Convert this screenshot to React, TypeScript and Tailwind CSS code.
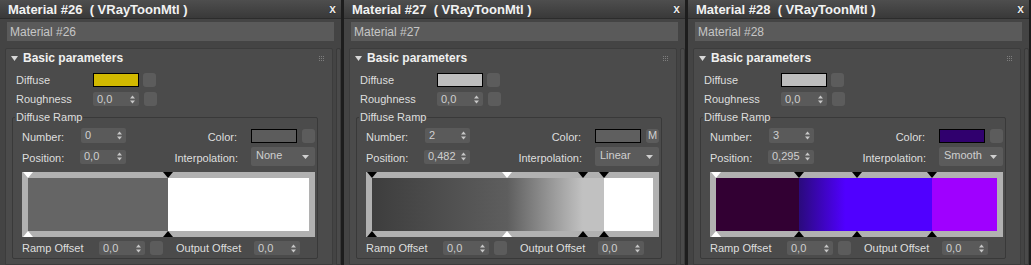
import React from 'react';

type Marker = { pos: number; white?: boolean };

interface PanelData {
  num: number;
  diffuse: string;
  number: string;
  position: string;
  interp: string;
  color: string;
  colorBtn?: string;
  ramp: string;
  markers: Marker[];
}

const panels: PanelData[] = [
  {
    num: 26,
    diffuse: 'bg-[#d2b900]',
    number: '0',
    position: '0,0',
    interp: 'None',
    color: 'bg-[#5c5c5c]',
    ramp: 'bg-[linear-gradient(to_right,#656565_0%,#656565_49.8%,#ffffff_49.8%,#ffffff_100%)]',
    markers: [{ pos: 0, white: true }, { pos: 0.498 }],
  },
  {
    num: 27,
    diffuse: 'bg-[#bebebe]',
    number: '2',
    position: '0,482',
    interp: 'Linear',
    color: 'bg-[#5f5f5f]',
    colorBtn: 'M',
    ramp: 'bg-[linear-gradient(to_right,#3d3d3d_0%,#5e5e5e_48.2%,#c1c1c1_75%,#c1c1c1_82.5%,#ffffff_82.5%,#ffffff_100%)]',
    markers: [{ pos: 0 }, { pos: 0.482, white: true }, { pos: 0.75 }, { pos: 0.825 }],
  },
  {
    num: 28,
    diffuse: 'bg-[#bebebe]',
    number: '3',
    position: '0,295',
    interp: 'Smooth',
    color: 'bg-[#30006e]',
    ramp: 'bg-[linear-gradient(to_right,#320033_0%,#320033_29.5%,#2a0a7c_29.5%,#5000ff_46%,#5000ff_77%,#9f00ff_77%,#9f00ff_100%)]',
    markers: [{ pos: 0, white: true }, { pos: 0.295 }, { pos: 0.5 }, { pos: 0.77 }],
  },
];

function Arrows() {
  return (
    <svg width="5" height="9" viewBox="0 0 5 9" className="shrink-0">
      <path d="M2.5 0.5 L5 3.5 L0 3.5 Z" fill="#c8c8c8" />
      <path d="M0 5.5 L5 5.5 L2.5 8.5 Z" fill="#c8c8c8" />
    </svg>
  );
}

function Spinner({ value, w = 'w-[46px]', h = 'h-[14px]' }: { value: string; w?: string; h?: string }) {
  return (
    <div className={`flex ${w} ${h} shrink-0 items-center justify-between rounded-[2px] bg-[#5a5a5a] pl-[4px] pr-[4px] text-[#cfcfcf]`}>
      <span className="leading-none">{value}</span>
      <Arrows />
    </div>
  );
}

function MapBtn({ label }: { label?: string }) {
  return (
    <div className="flex h-[14px] w-[13px] shrink-0 items-center justify-center rounded-[3px] bg-[#5c5c5c] text-[11px] leading-none text-[#cfcfcf]">
      {label}
    </div>
  );
}

function Swatch({ color }: { color: string }) {
  return <div className={`h-[14px] w-[46px] shrink-0 border border-black ${color}`} />;
}

function Grip() {
  return (
    <div className="grid grid-cols-3 gap-[1px]">
      {Array.from({ length: 9 }).map((_, i) => (
        <div key={i} className="h-[1px] w-[1px] bg-[#7d7d7d]" />
      ))}
    </div>
  );
}

function Ramp({ data }: { data: PanelData }) {
  return (
    <div className="relative h-[65px] w-[293px] bg-[#b1b1b1] p-[6px]">
      <div className={`h-full w-full ${data.ramp}`} />
      {data.markers.map((m, i) => (
        <React.Fragment key={i}>
          <svg
            width="10"
            height="6"
            viewBox="0 0 10 6"
            className="absolute top-0"
            style={{ left: 6 + m.pos * 281 - 5 }}
          >
            <path d="M0 0 L10 0 L5 6 Z" fill={m.white ? '#ffffff' : '#000000'} />
          </svg>
          <svg
            width="10"
            height="6"
            viewBox="0 0 10 6"
            className="absolute bottom-0"
            style={{ left: 6 + m.pos * 281 - 5 }}
          >
            <path d="M5 0 L10 6 L0 6 Z" fill={m.white ? '#ffffff' : '#000000'} />
          </svg>
        </React.Fragment>
      ))}
    </div>
  );
}

function Panel({ data }: { data: PanelData }) {
  return (
    <div className="flex h-[265px] w-[341px] shrink-0 flex-col overflow-hidden bg-[#444444]">
      <div className="flex h-[19px] shrink-0 items-center justify-between border-b border-[#2c2c2c] bg-[linear-gradient(#4e4e4e,#393939)] pl-[8px] pr-[5px]">
        <span className="whitespace-pre text-[13px] font-bold leading-none text-[#f2f2f2]">
          {`Material #${data.num}  ( VRayToonMtl )`}
        </span>
        <span className="text-[12px] font-bold leading-none text-[#e8e8e8] [text-shadow:0_0_1px_#000]">x</span>
      </div>

      <div className="mx-[7px] mt-[3px] flex h-[19px] shrink-0 items-center bg-[#5a5a5a] pl-[3px] text-[12px] text-[#c6c6c6]">
        Material #{data.num}
      </div>

      <div className="mt-[7px] flex flex-1 gap-[3px] pl-[5px]">
        <div className="flex w-[328px] flex-col rounded-t-[2px] border border-[#3c3c3c] bg-[#4b4b4b]">
          <div className="flex h-[18px] shrink-0 items-center justify-between pl-[5px] pr-[8px]">
            <div className="flex items-center">
              <svg width="7" height="5" viewBox="0 0 7 5" className="mr-[5px]">
                <path d="M0 0 L7 0 L3.5 5 Z" fill="#d8d8d8" />
              </svg>
              <span className="text-[12px] font-bold leading-none text-[#f0f0f0]">Basic parameters</span>
            </div>
            <Grip />
          </div>

          <div className="mt-[6px] flex h-[14px] items-center pl-[10px]">
            <span className="w-[77px] text-[#dedede]">Diffuse</span>
            <Swatch color={data.diffuse} />
            <div className="ml-[4px]">
              <MapBtn />
            </div>
          </div>

          <div className="mt-[5px] flex h-[14px] items-center pl-[10px]">
            <span className="w-[77px] text-[#dedede]">Roughness</span>
            <Spinner value="0,0" />
            <div className="ml-[5px]">
              <MapBtn />
            </div>
          </div>

          <fieldset className="ml-[6px] mt-[4px] w-[306px] rounded-[2px] border border-[#393939] pb-[3px] pl-[9px] pr-[2px]">
            <legend className="-ml-[7px] px-[1px] leading-[14px] text-[#dedede]">Diffuse Ramp</legend>

            <div className="mt-[4px] flex h-[15px] items-center">
              <span className="mt-[4px] w-[59px] text-[#dedede]">Number:</span>
              <Spinner value={data.number} w="w-[45px]" h="h-[15px]" />
              <span className="mt-[4px] flex-1 pr-[14px] text-right text-[#dedede]">Color:</span>
              <Swatch color={data.color} />
              <div className="ml-[5px]">
                <MapBtn label={data.colorBtn} />
              </div>
            </div>

            <div className="mt-[4px] flex h-[19px] items-center">
              <span className="mt-[4px] w-[58px] text-[#dedede]">Position:</span>
              <Spinner value={data.position} />
              <span className="mt-[4px] flex-1 pr-[13px] text-right text-[#dedede]">Interpolation:</span>
              <div className="flex h-[19px] w-[64px] items-center justify-between rounded-[2px] bg-[#5b5b5b] pl-[5px] pr-[6px] text-[#cfcfcf]">
                <span className="-mt-[2px]">{data.interp}</span>
                <svg width="7" height="4" viewBox="0 0 7 4">
                  <path d="M0 0 L7 0 L3.5 4 Z" fill="#d0d0d0" />
                </svg>
              </div>
            </div>

            <div className="mt-[6px]">
              <Ramp data={data} />
            </div>

            <div className="mt-[4px] flex h-[14px] items-center">
              <span className="w-[77px] text-[#dedede]">Ramp Offset</span>
              <Spinner value="0,0" />
              <div className="ml-[5px]">
                <MapBtn />
              </div>
              <span className="ml-[13px] w-[78px] text-[#dedede]">Output Offset</span>
              <Spinner value="0,0" />
            </div>
          </fieldset>
        </div>
        <div className="w-[5px] rounded-t-[2px] border border-[#3a3a3a] bg-[#4a4a4a]" />
      </div>
    </div>
  );
}

export default function App() {
  return (
    <div className="flex h-[265px] w-[1031px] gap-[3px] overflow-hidden bg-[#1d1d1d] font-['Liberation_Sans',Arial,sans-serif] text-[11px]">
      {panels.map((p) => (
        <Panel key={p.num} data={p} />
      ))}
    </div>
  );
}
